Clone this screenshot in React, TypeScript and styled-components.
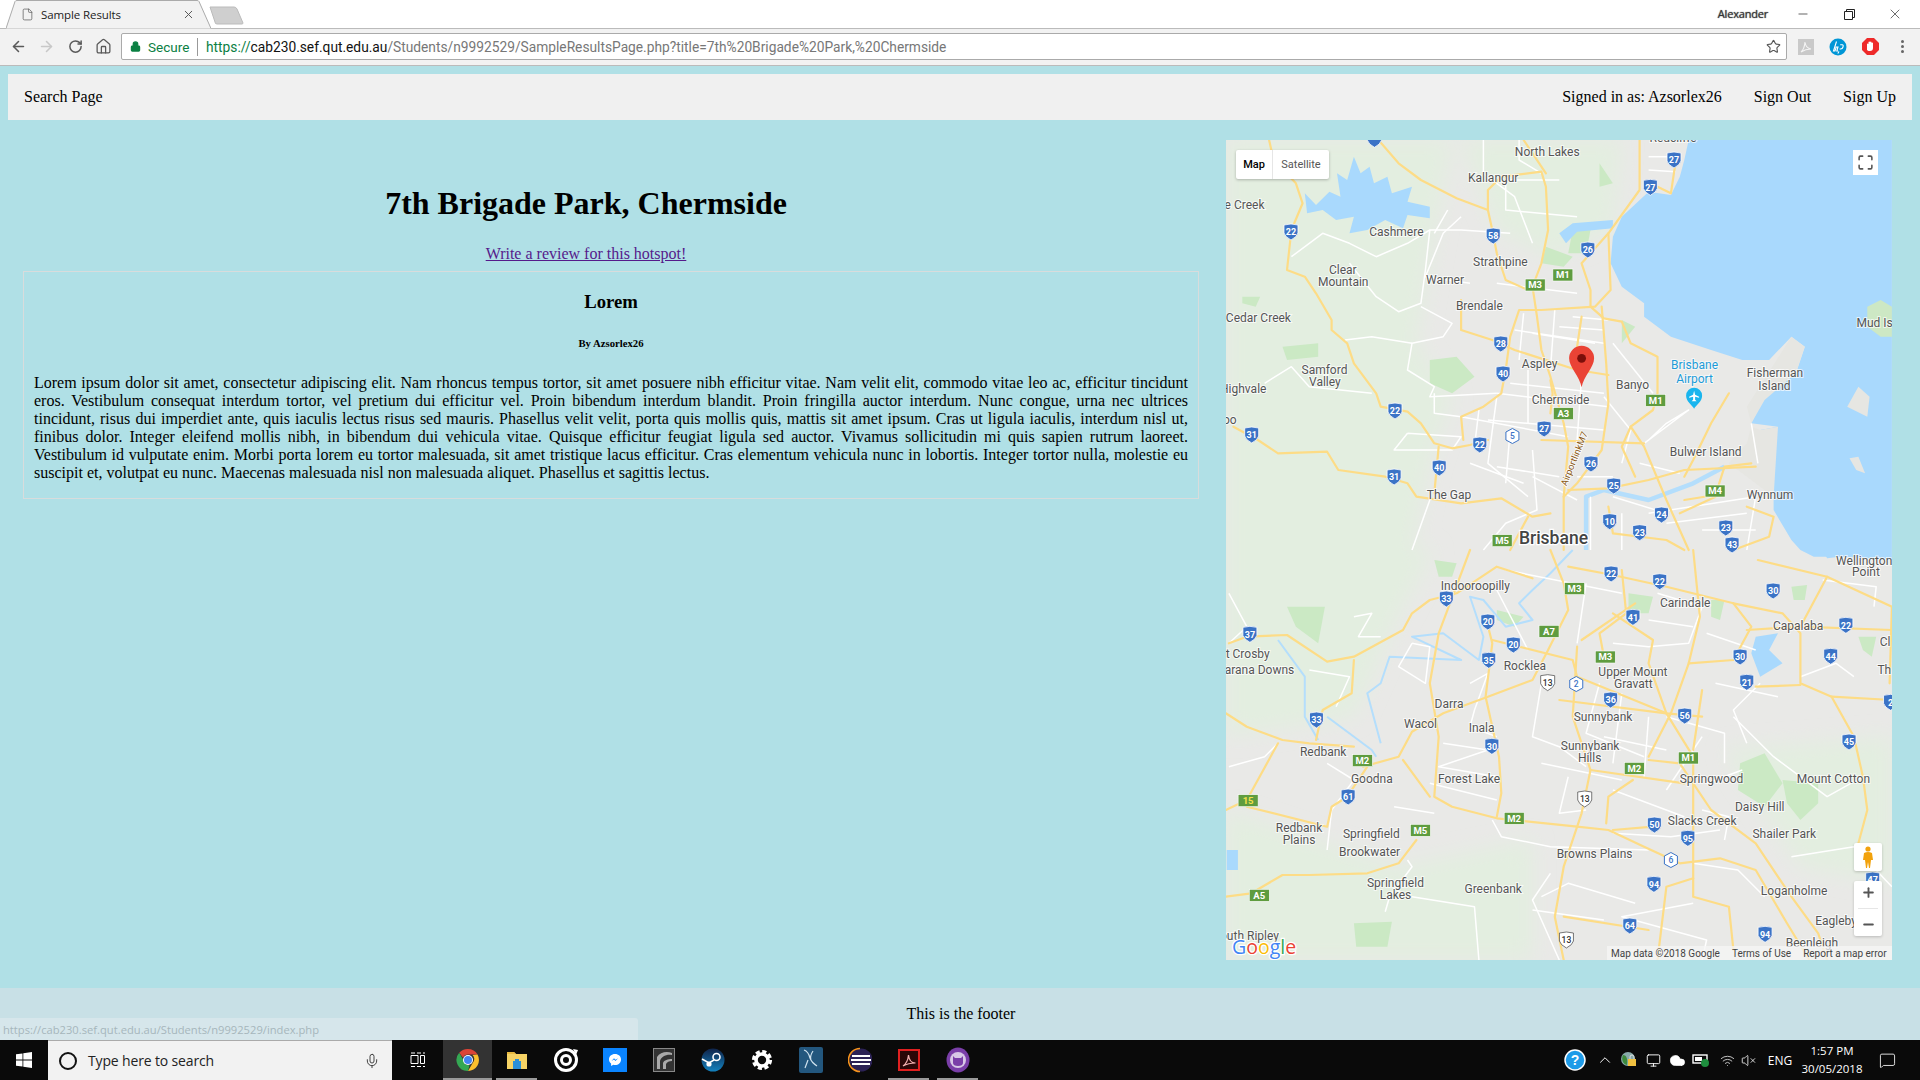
import React from "react";
import styled, { createGlobalStyle } from "styled-components";
import { ArrowLeft, ArrowRight, RotateCw, Home, Lock, Star, Minus, X, File, Mic, ChevronUp, VolumeX, Wifi, Cloud, Monitor, MessageSquare, Plus, Maximize } from "lucide-react";

const Global = createGlobalStyle`
  html, body { margin: 0; padding: 0; height: 100%; overflow: hidden; }
  body { font-family: "Liberation Serif", serif; font-size: 16px; color: #000; background: #b0e0e6; }
  * { box-sizing: border-box; }
`;

const Screen = styled.div`
  width: 1920px; height: 1080px; display: flex; flex-direction: column; overflow: hidden; position: relative;
`;

/* Browser frame */
const TitleBar = styled.div`
  height: 29px; background: #fff; border-bottom: 1px solid #bbb; display: flex; align-items: flex-start; padding-left: 6px; font-family: "Noto Sans", sans-serif;
`;
const Tab = styled.div`
  width: 205px; height: 29px; position: relative; display: flex; align-items: center; padding: 0 16px 1px 15px; gap: 7px; font-family: "Open Sans", sans-serif; font-size: 11.5px; color: #222;
`;
const TabShape = styled.svg`
  position: absolute; left: 0; top: 0; z-index: 0;
`;
const TabLabel = styled.span`
  position: relative; flex: 1; letter-spacing: -0.1px;
`;
const TabIcon = styled.span`
  position: relative; display: flex; color: #555;
`;
const NewTab = styled.svg`
  margin: 6px 0 0 -2px;
`;
const TitleSpacer = styled.div`flex: 1;`;
const UserName = styled.span`
  font-size: 11px; line-height: 28px; color: #333; margin-right: 12px; font-family: "Open Sans", sans-serif; letter-spacing: -0.2px; text-shadow: 0 0 1px #888, 0 0 1px #888;
`;
const WinButton = styled.div`
  width: 46px; height: 28px; display: flex; align-items: center; justify-content: center; color: #222;
`;
const WinButtons = styled.div`
  display: flex; padding-right: 2px;
`;
const Toolbar = styled.div`
  height: 37px; background: #f2f2f2; border-bottom: 1px solid #bbb; display: flex; align-items: center; padding-left: 4px; padding-bottom: 1px;
`;
const NavButton = styled.div<{ $off?: boolean }>`
  width: 28.5px; display: flex; justify-content: center; color: ${(p) => (p.$off ? "#c8c8c8" : "#5a5a5a")};
`;
const Omnibox = styled.div`
  width: 1666px; height: 27px; margin-left: 3px; background: #fff; border: 1px solid #aaa; border-radius: 2px; display: flex; align-items: center; padding: 0 5px 0 8px; font-family: Roboto, sans-serif; font-size: 13.75px;
`;
const Secure = styled.span`
  color: #0b8043; margin-left: 7px; font-size: 13.5px; width: 50px; border-right: 1px solid #999; line-height: 18px;
`;
const Url = styled.span`
  margin-left: 8px; flex: 1; color: #777; white-space: nowrap;
`;
const UrlGreen = styled.span`color: #0b8043;`;
const UrlDark = styled.span`color: #111;`;
const Actions = styled.div`
  display: flex; margin-left: 3px;
`;
const ActionSlot = styled.div`
  width: 32px; display: flex; justify-content: center; align-items: center;
`;
const Dots = styled.div`
  display: flex; flex-direction: column; gap: 2px;
  i { width: 3px; height: 3px; border-radius: 50%; background: #666; display: block; }
`;

/* Page */
const Viewport = styled.div`
  flex: 1; background: #b0e0e6; display: flex; flex-direction: column; position: relative; min-height: 0;
`;
const NavBar = styled.nav`
  margin: 8px 8px 0; height: 46px; background: #f0f0f0; display: flex; align-items: center; padding: 0 16px; gap: 32px; flex: none;
`;
const NavLink = styled.a`
  color: #000; text-decoration: none;
`;
const NavSpacer = styled.div`flex: 1;`;
const Main = styled.main`
  display: flex; flex: none; height: 840px;
`;
const LeftColumn = styled.section`
  width: 1226px; padding-top: 43.5px;
`;
const Header = styled.div`
  width: 1172px; text-align: center;
`;
const Title = styled.h1`
  margin: 21.44px 0 23px; font-size: 32px; line-height: 37px;
`;
const ReviewLink = styled.a`
  color: #551a8b; text-decoration: underline; display: block; line-height: 18px;
`;
const Card = styled.article`
  margin: 8px 0 0 23px; width: 1176px; border: 1px solid #d8dcdc; padding: 0 10px; text-align: center; display: flow-root;
`;
const CardTitle = styled.h3`
  margin: 18.72px 0; font-size: 18.72px; line-height: 21px;
`;
const CardBy = styled.h6`
  margin: 25px 0; font-size: 10.72px; line-height: 12px;
`;
const CardBody = styled.p`
  margin: 16px 0; text-align: justify; line-height: 18px;
`;
const MapFrame = styled.div`
  width: 666px; height: 820px; margin-top: 20px; position: relative; overflow: hidden; background: #e9e9e6; font-family: Roboto, sans-serif;
`;
const MapSvg = styled.svg`
  display: block;
`;
const MapType = styled.div`
  position: absolute; left: 10px; top: 10px; height: 29px; width: 93px; background: #fff; border-radius: 2px; display: flex; font-size: 11px; box-shadow: 0 1px 3px rgba(0,0,0,.25);
`;
const MapTypeOption = styled.div<{ $on?: boolean }>`
  flex: ${(p) => (p.$on ? "0 0 37px" : "1")}; display: flex; align-items: center; justify-content: center; color: ${(p) => (p.$on ? "#000" : "#565656")}; font-weight: ${(p) => (p.$on ? 500 : 400)}; border-right: ${(p) => (p.$on ? "1px solid #e6e6e6" : "none")};
`;
const FullscreenButton = styled.div`
  position: absolute; left: 627px; top: 10px; width: 25px; height: 25px; background: #fff; display: flex; align-items: center; justify-content: center; color: #555;
`;
const Pegman = styled.div`
  position: absolute; right: 10px; bottom: 89px; width: 28px; height: 28px; background: #fff; border-radius: 2px; display: flex; align-items: center; justify-content: center; box-shadow: 0 1px 3px rgba(0,0,0,.2);
`;
const ZoomBox = styled.div`
  position: absolute; right: 10px; bottom: 24px; width: 28px; height: 55px; background: #fff; border-radius: 2px; display: flex; flex-direction: column; align-items: center; justify-content: space-around; color: #555; box-shadow: 0 1px 3px rgba(0,0,0,.2);
`;
const ZoomRule = styled.div`
  width: 20px; height: 1px; background: #e6e6e6;
`;
const Attribution = styled.div`
  position: absolute; right: 0; bottom: 0; height: 14px; width: 285px; background: rgba(245,245,245,.75); display: flex; align-items: center; padding-left: 4px; font-size: 10px; color: #444; white-space: nowrap;
`;
const AttrTerms = styled.span`margin-left: 12px;`;
const Footer = styled.footer`
  margin-top: 28px; height: 52px; background: #c8e0e6; text-align: center; padding: 17px 0 0 2px; line-height: 18px; flex: none;
`;
const StatusBubble = styled.div`
  position: absolute; left: 0; bottom: 0; width: 638px; height: 22px; background: #d6e6eb; border-radius: 0 3px 0 0; font-family: "Open Sans", sans-serif; font-size: 11.2px; line-height: 23px; color: #a6b6bc; padding-left: 3px;
`;

/* Taskbar */
const Taskbar = styled.div`
  height: 40px; background: #0a0a0a; display: flex; align-items: stretch; flex: none; color: #fff; font-family: "Open Sans", sans-serif;
`;
const StartButton = styled.div`
  width: 48px; display: flex; align-items: center; justify-content: center;
`;
const SearchBox = styled.div`
  width: 344px; background: #f2f2f2; border-top: 1px solid #aaa; display: flex; align-items: center; padding: 0 12px 0 12px; color: #222; font-size: 14px; gap: 11px;
`;
const Cortana = styled.div`
  width: 18px; height: 18px; border-radius: 50%; border: 2.5px solid #111; flex: none; margin-left: -1px;
`;
const SearchText = styled.span`flex: 1; letter-spacing: -0.15px;`;
const TaskView = styled.div`
  width: 51px; display: flex; align-items: center; justify-content: center;
`;
const TaskApp = styled.div<{ $active?: boolean; $open?: boolean }>`
  width: 49px; position: relative; display: flex; align-items: center; justify-content: center; background: ${(p) => (p.$active ? "#333" : "transparent")};
  &::after { content: ""; position: absolute; left: ${(p) => (p.$active ? "0" : "4px")}; right: ${(p) => (p.$active ? "0" : "4px")}; bottom: 0; height: 2px; background: ${(p) => (p.$open ? "#9a9a9a" : "transparent")}; }
`;
const TraySpacer = styled.div`flex: 1;`;
const TrayItem = styled.div<{ $w: number }>`
  width: ${(p) => p.$w}px; display: flex; align-items: center; justify-content: center; font-size: 12px;
`;
const Clock = styled.div`
  width: 60px; display: flex; flex-direction: column; align-items: center; justify-content: center; font-size: 11.5px; line-height: 18px; white-space: nowrap;
`;

/* Map data, in crop coordinates of the reference map */
const mx = (x: number) => x / 2.24 - 6;
const myT = (y: number) => y / 3 - 10;
const myB = (y: number) => y / 3 + 410;
type Sec = "T" | "B";
const yOf = (s: Sec, y: number) => (s === "T" ? myT(y) : myB(y));
const pts = (s: Sec, a: number[]) => {
  const r: string[] = [];
  for (let i = 0; i < a.length; i += 2) r.push(`${mx(a[i]).toFixed(1)},${yOf(s, a[i + 1]).toFixed(1)}`);
  return r.join(" ");
};

const rural: [Sec, number[]][] = [
  ["T", [13, 30, 520, 30, 470, 400, 440, 640, 520, 800, 470, 1000, 430, 1260, 13, 1260]],
  ["B", [13, 0, 480, 0, 400, 200, 300, 500, 13, 560]],
  ["B", [13, 780, 400, 950, 700, 870, 700, 1230, 13, 1230]],
  ["B", [1130, 600, 1505, 560, 1505, 1000, 1300, 950]],
  ["T", [540, 30, 900, 30, 880, 300, 740, 380, 620, 300]],
];
const greens: [Sec, number[]][] = [
  ["T", [470, 690, 530, 680, 570, 740, 520, 790, 470, 760]],
  ["T", [140, 650, 220, 640, 220, 680, 150, 690]],
  ["T", [730, 350, 790, 380, 770, 410, 720, 400]],
  ["T", [790, 300, 830, 300, 820, 370, 780, 370]],
  ["T", [850, 100, 880, 160, 850, 170]],
  ["T", [50, 500, 90, 500, 80, 530, 50, 520]],
  ["T", [900, 570, 930, 590, 900, 640]],
  ["B", [150, 170, 235, 170, 220, 280, 170, 230]],
  ["B", [620, 180, 680, 200, 660, 230, 620, 210]],
  ["B", [915, 130, 970, 140, 960, 190, 915, 190]],
  ["B", [1165, 640, 1220, 610, 1260, 700, 1220, 770, 1160, 720]],
  ["B", [1260, 690, 1340, 700, 1340, 760, 1300, 810, 1270, 760]],
  ["B", [300, 1120, 385, 1115, 375, 1190, 305, 1190]],
  ["B", [1100, 150, 1130, 150, 1120, 210, 1100, 200]],
  ["B", [480, 30, 530, 40, 520, 80, 490, 80]],
  ["B", [1280, 110, 1315, 105, 1310, 150, 1285, 150]],
  ["B", [1430, 260, 1470, 260, 1460, 320, 1440, 300]],
];
const waterFill: [Sec, number[]][] = [
  ["T", [1050, 30, 1040, 90, 1030, 140, 1010, 195, 960, 185, 900, 260, 880, 320, 875, 400, 900, 470, 950, 520, 950, 560, 1010, 620, 1100, 660, 1170, 690, 1230, 690, 1280, 620, 1310, 650, 1290, 730, 1220, 800, 1190, 880, 1250, 890, 1210, 900, 1220, 980, 1240, 1070, 1240, 1140, 1280, 1230, 1300, 1260, 1505, 1260, 1505, 30]],
  ["B", [1300, 0, 1330, 20, 1400, 20, 1505, 30, 1505, 0]],
  ["T", [190, 190, 215, 225, 245, 185, 270, 200, 262, 130, 285, 150, 300, 80, 315, 130, 335, 110, 345, 160, 375, 140, 385, 190, 430, 170, 420, 215, 470, 230, 470, 265, 420, 255, 410, 295, 370, 270, 330, 300, 290, 310, 300, 260, 260, 270, 230, 240, 195, 250]],
  ["T", [760, 310, 790, 280, 880, 270, 880, 295, 800, 305, 775, 340]],
  ["B", [1200, 260, 1250, 250, 1230, 300, 1260, 340, 1210, 380, 1190, 310]],
  ["B", [1350, 0, 1380, 10, 1420, 15, 1360, 25]],
  ["B", [15, 900, 40, 900, 40, 960, 15, 960]],
];
const landIsles: [Sec, number[]][] = [
  ["T", [1180, 830, 1280, 620, 1310, 650, 1290, 730, 1220, 810, 1190, 880]],
  ["T", [1405, 830, 1430, 770, 1455, 800, 1450, 860]],
  ["T", [1410, 985, 1430, 980, 1445, 1030, 1425, 1020]],
  ["T", [1450, 530, 1480, 510, 1505, 530, 1505, 620, 1480, 620, 1450, 590]],
  ["T", [1190, 890, 1210, 900, 1250, 890, 1240, 1100, 1140, 1000, 1180, 940]],
];
const rivers: [Sec, number[]][] = [
  ["T", [820, 1260, 820, 1100, 860, 1080, 960, 1110, 1060, 1060, 1130, 1010]],
  ["B", [790, 0, 740, 70, 700, 120, 670, 160, 700, 210, 640, 230, 590, 150, 560, 140, 590, 260, 580, 330, 500, 250, 430, 260, 540, 330, 380, 320, 360, 400, 330, 430, 360, 580]],
  ["B", [130, 270, 190, 380, 190, 500, 220, 570]],
  ["B", [240, 500, 340, 600, 350, 620]],
];
const white: [Sec, number[]][] = [
  ["T", [160, 380, 230, 310, 290, 340, 350, 380, 420, 340, 470, 300, 540, 300, 650, 310]],
  ["T", [470, 300, 460, 420, 450, 520, 400, 545, 350, 500, 290, 400]],
  ["T", [560, 460, 460, 440, 500, 310, 540, 260]],
  ["T", [620, 460, 800, 490]],
  ["T", [590, 30, 590, 130, 660, 200, 700, 340]],
  ["T", [670, 30, 670, 90, 720, 130]],
  ["T", [450, 530, 520, 580, 500, 620, 430, 640, 420, 720, 480, 770, 470, 800, 620, 790]],
  ["T", [280, 630, 340, 620, 430, 640]],
  ["T", [100, 760, 160, 710, 200, 770, 340, 790]],
  ["T", [680, 550, 670, 690]],
  ["T", [660, 600, 860, 640]],
  ["T", [750, 540, 740, 720]],
  ["T", [620, 790, 870, 830]],
  ["T", [540, 860, 780, 920]],
  ["T", [480, 790, 480, 850, 540, 860]],
  ["T", [420, 910, 540, 920, 520, 960, 390, 960, 420, 910]],
  ["T", [620, 800, 600, 1000, 690, 1100]],
  ["T", [700, 960, 710, 1140, 640, 1180, 590, 1260]],
  ["T", [860, 800, 920, 900, 900, 1000]],
  ["T", [880, 640, 970, 790]],
  ["T", [800, 1040, 880, 1040]],
  ["T", [960, 1150, 1200, 1100, 1180, 1260]],
  ["T", [900, 1150, 900, 1260]],
  ["T", [1080, 1200, 1200, 1200]],
  ["T", [950, 940, 1050, 840, 1000, 880, 960, 930]],
  ["T", [430, 1260, 470, 1110]],
  ["T", [1190, 880, 1205, 1000]],
  ["T", [510, 240, 480, 310]],
  ["T", [760, 150, 640, 150, 640, 240, 800, 260]],
  ["T", [960, 80, 1030, 80]], ["T", [960, 120, 1020, 125]],
  ["T", [700, 610, 840, 640]], ["T", [650, 760, 860, 790]], ["T", [600, 870, 860, 900]], ["T", [580, 840, 570, 950]],
  ["T", [690, 720, 690, 880]], ["T", [810, 740, 800, 930]], ["T", [650, 900, 640, 1060]], ["T", [620, 1010, 760, 1040]],
  ["T", [700, 1040, 800, 1110]], ["T", [560, 1000, 680, 1060]], ["T", [880, 1100, 1000, 1150]], ["T", [940, 1000, 1030, 1030]],
  ["T", [790, 560, 870, 570]], ["T", [760, 590, 860, 600]], ["T", [830, 1100, 830, 1260]], ["T", [1000, 1180, 1180, 1150]],
  ["B", [20, 130, 60, 230, 20, 280]],
  ["B", [200, 360, 290, 380, 260, 470]],
  ["B", [300, 200, 340, 190, 310, 260, 360, 260]],
  ["B", [430, 280, 400, 350, 460, 400, 470, 290, 430, 280]],
  ["B", [560, 400, 600, 370, 570, 480, 560, 530, 620, 560]],
  ["B", [500, 580, 600, 600, 490, 650, 620, 680]],
  ["B", [470, 700, 620, 750]],
  ["B", [720, 400, 700, 560, 760, 590, 820, 650]],
  ["B", [780, 680, 760, 790, 820, 780]],
  ["B", [610, 810, 630, 860, 740, 890, 960, 900]],
  ["B", [850, 400, 820, 550, 950, 620]],
  ["B", [1000, 500, 1130, 550, 1130, 640]],
  ["B", [1150, 500, 1240, 620, 1360, 740, 1440, 680]],
  ["B", [980, 130, 1080, 170, 1050, 280, 960, 290, 880, 280]],
  ["B", [1090, 250, 1200, 300]],
  ["B", [1350, 90, 1470, 110, 1465, 170]],
  ["B", [1210, 400, 1150, 480, 1180, 580]],
  ["B", [1300, 380, 1380, 340, 1420, 380]],
  ["B", [1280, 920, 1420, 890, 1505, 1010]],
  ["B", [1080, 780, 1140, 800, 1130, 870]],
  ["B", [720, 1040, 780, 1000, 930, 1060]],
  ["B", [700, 1080, 860, 1110]],
  ["B", [740, 970, 700, 1050, 760, 1230]],
  ["B", [1060, 1060, 900, 1100, 1090, 1170, 1080, 1230]],
  ["B", [1220, 1040, 1160, 960, 1060, 940]],
  ["B", [430, 1040, 570, 1070, 580, 1230]],
  ["B", [390, 770, 480, 790]],
  ["B", [240, 640, 300, 690, 250, 780, 240, 900]],
  ["B", [20, 650, 100, 620, 130, 580]],
  ["B", [370, 1085, 380, 1040, 430, 950, 420, 930]],
  ["B", [880, 850, 1010, 860, 1120, 840]],
  ["B", [640, 60, 900, 130]], ["B", [820, 100, 800, 280]], ["B", [620, 120, 690, 300]], ["B", [960, 210, 1060, 230]],
  ["B", [860, 560, 1000, 600]], ["B", [900, 430, 880, 640]], ["B", [960, 500, 950, 680]], ["B", [720, 640, 900, 690]],
  ["B", [1080, 560, 1000, 720]], ["B", [1090, 700, 1170, 660]], ["B", [880, 720, 1040, 800]], ["B", [1110, 400, 1250, 440]],
];
const yellow: [Sec, number[]][] = [
  ["T", [355, 30, 400, 100, 450, 150, 530, 205, 600, 240, 610, 300, 620, 370, 640, 450, 690, 480, 720, 470]],
  ["T", [110, 30, 120, 90, 170, 160, 185, 220, 160, 300, 150, 420, 190, 440, 215, 490, 250, 570, 250, 600, 285, 640, 300, 700, 350, 790, 360, 830, 420, 845, 450, 880, 480, 940, 520, 955, 560, 945, 600, 930]],
  ["T", [600, 240, 600, 180, 630, 140, 720, 125, 730, 170, 735, 300, 720, 400, 700, 470, 710, 560, 720, 660, 740, 740, 770, 880, 780, 950, 770, 1100, 770, 1260]],
  ["T", [680, 30, 720, 110, 730, 130]],
  ["T", [940, 30, 940, 180, 870, 310, 810, 400, 830, 480, 830, 530, 860, 565, 900, 575, 920, 640, 980, 680, 980, 790, 970, 840, 920, 890, 950, 950, 1000, 1110, 1050, 1260]],
  ["T", [980, 170, 1010, 190, 1020, 100]],
  ["T", [870, 310, 875, 480, 840, 530, 720, 540, 670, 540, 650, 620, 640, 720, 630, 790, 590, 830, 540, 860, 545, 930]],
  ["T", [540, 510, 540, 600, 610, 630, 660, 660, 800, 720, 870, 735]],
  ["T", [810, 560, 800, 650]],
  ["T", [855, 530, 865, 700, 870, 820, 855, 960, 800, 1060, 770, 1100]],
  ["T", [740, 750, 745, 790, 740, 850]],
  ["T", [1140, 790, 1100, 880, 1060, 990, 1040, 1040]],
  ["T", [30, 890, 85, 930, 130, 970, 240, 965, 265, 1020, 370, 1040, 420, 1060, 440, 1100, 540, 1120, 630, 1105, 700, 1160, 740, 1150]],
  ["T", [490, 950, 480, 1090]],
  ["T", [720, 930, 950, 940]],
  ["T", [780, 1080, 870, 1075, 960, 1050, 1040, 1020, 1200, 1010]],
  ["T", [870, 1130, 880, 1210, 1000, 1230, 1040, 1260]],
  ["T", [1040, 1110, 1110, 1095, 1130, 1010, 1190, 1000]],
  ["T", [1030, 1150, 1110, 1100]],
  ["T", [1180, 1130, 1240, 1160, 1230, 1220, 1150, 1260]],
  ["T", [690, 1160, 650, 1260]],
  ["T", [920, 890, 900, 950, 930, 1040]],
  ["B", [13, 490, 60, 530, 140, 570, 200, 580, 300, 590]],
  ["B", [740, 0, 770, 100, 780, 180, 735, 300, 700, 390, 600, 440, 500, 490, 430, 545, 400, 620, 320, 650]],
  ["B", [560, 0, 490, 250, 470, 400, 490, 560, 480, 740, 520, 770, 620, 805, 800, 830, 870, 840, 950, 890, 1030, 940, 1120, 925, 1200, 960, 1270, 1120, 1320, 1230]],
  ["B", [20, 280, 60, 260, 150, 255, 240, 335, 300, 320, 410, 240, 430, 190, 470, 150, 530, 130, 620, 50, 700, 85]],
  ["B", [300, 330, 295, 430, 230, 480, 215, 570]],
  ["B", [610, 270, 790, 330, 800, 380, 1000, 490, 1080, 500]],
  ["B", [595, 200, 610, 280, 595, 440, 625, 620, 630, 730, 620, 800]],
  ["B", [1060, 0, 1075, 200, 1050, 340, 1010, 490, 960, 620]],
  ["B", [760, 450, 1000, 490]],
  ["B", [1050, 340, 1150, 330, 1190, 230, 1150, 160, 1000, 110, 880, 75, 780, 50]],
  ["B", [1150, 160, 1260, 190, 1300, 250, 1300, 400, 1370, 440, 1505, 450]],
  ["B", [1505, 240, 1300, 230, 1180, 240]],
  ["B", [1200, 410, 1300, 405]],
  ["B", [1370, 440, 1420, 560, 1440, 680, 1450, 780, 1430, 880]],
  ["B", [1360, 80, 1300, 230]],
  ["B", [1205, 30, 1360, 80, 1505, 170, 1500, 400]],
  ["B", [1000, 490, 1060, 620, 1060, 960, 1060, 1040, 1140, 1070, 1150, 1200]],
  ["B", [960, 630, 1030, 640, 1060, 700, 1100, 780, 1200, 880, 1280, 1040, 1340, 1150, 1360, 1230]],
  ["B", [830, 660, 1040, 700]],
  ["B", [830, 660, 810, 790, 770, 950, 750, 1100, 770, 1230]],
  ["B", [925, 690, 870, 740, 865, 820]],
  ["B", [800, 290, 790, 500, 830, 660]],
  ["B", [810, 270, 930, 160]],
  ["B", [880, 190, 970, 270, 960, 340, 1000, 490]],
  ["B", [470, 740, 410, 630]],
  ["B", [440, 870, 400, 940, 330, 970, 200, 975, 140, 975, 70, 1030, 13, 1040]],
  ["B", [13, 780, 60, 750, 130, 580]],
  ["B", [60, 770, 240, 830, 250, 770, 285, 740, 330, 650]],
  ["B", [1060, 985, 1000, 1010, 980, 1230]],
  ["B", [770, 1100, 960, 1140]],
  ["B", [1080, 420, 1060, 600]],
  ["B", [880, 840, 970, 830]],
  ["B", [900, 60, 910, 190, 850, 250, 860, 320]],
];

type Lab = [string, number, number, string?];
const labels: { s: Sec; items: Lab[] }[] = [
  { s: "T", items: [["Redcliffe", 1015, 25], ["North Lakes", 733, 67], ["Kallangur", 612, 145], ["Cashmere", 395, 307], ["e Creek", 55, 226], ["Strathpine", 628, 397], ["Clear", 275, 421], ["Mountain", 276, 457], ["Warner", 504, 451], ["Brendale", 581, 528], ["Cedar Creek", 86, 565], ["Mud Island", 1492, 579], ["Samford", 234, 721], ["Valley", 235, 757], ["Aspley", 716, 703], ["Banyo", 924, 764], ["Fisherman", 1243, 730], ["Island", 1242, 769], ["Highvale", 52, 778], ["Chermside", 763, 811], ["oo", 22, 870], ["The Gap", 513, 1096], ["Bulwer Island", 1088, 966], ["Wynnum", 1232, 1096]] },
  { s: "B", items: [["Wellington", 1443, 32], ["Point", 1447, 67], ["Indooroopilly", 572, 107], ["Carindale", 1042, 160], ["Capalaba", 1295, 227], ["Cl", 1490, 277], ["t Crosby", 62, 311], ["Karana Downs", 80, 361], ["Th", 1488, 361], ["Rocklea", 683, 349], ["Upper Mount", 925, 367], ["Gravatt", 926, 403], ["Darra", 513, 463], ["Sunnybank", 858, 502], ["Wacol", 449, 522], ["Inala", 586, 535], ["Sunnybank", 829, 589], ["Hills", 828, 625], ["Redbank", 231, 607], ["Goodna", 340, 688], ["Forest Lake", 558, 688], ["Springwood", 1101, 688], ["Mount Cotton", 1374, 688], ["Daisy Hill", 1209, 772], ["Slacks Creek", 1080, 814], ["Redbank", 177, 835], ["Plains", 177, 871], ["Springfield", 339, 853], ["Shailer Park", 1264, 853], ["Brookwater", 335, 907], ["Browns Plains", 839, 913], ["Springfield", 393, 1000], ["Lakes", 393, 1036], ["Greenbank", 612, 1018], ["Loganholme", 1286, 1024], ["Eagleby", 1380, 1114], ["Beenleigh", 1326, 1179], ["South Ripley", 58, 1159]] },
];

type Sh = [string, number, number];
const blue: { s: Sec; items: Sh[] }[] = [
  { s: "T", items: [["22", 159, 306], ["27", 1017, 90], ["27", 964, 172], ["58", 612, 318], ["26", 824, 360], ["28", 629, 642], ["40", 634, 732], ["22", 392, 843], ["31", 71, 915], ["27", 726, 897], ["22", 582, 945], ["40", 491, 1014], ["31", 390, 1041], ["26", 831, 1002], ["25", 882, 1068], ["10", 873, 1175], ["24", 989, 1155], ["23", 940, 1208], ["23", 1133, 1194], ["43", 1147, 1245], ["", 346, 28]] },
  { s: "B", items: [["22", 876, 72], ["22", 985, 95], ["30", 1239, 123], ["33", 507, 147], ["41", 925, 202], ["20", 600, 216], ["22", 1402, 226], ["37", 67, 253], ["20", 657, 285], ["44", 1368, 319], ["30", 1165, 321], ["35", 602, 331], ["21", 1180, 397], ["36", 875, 450], ["56", 1041, 498], ["33", 216, 510], ["45", 1409, 576], ["30", 609, 589], ["61", 287, 741], ["50", 973, 825], ["95", 1048, 865], ["94", 972, 1003], ["64", 918, 1128], ["94", 1221, 1153], ["47", 1462, 990], ["2", 1502, 457]] },
];
const green: { s: Sec; items: Sh[] }[] = [
  { s: "T", items: [["M1", 768, 435], ["M3", 706, 465], ["M1", 976, 811], ["A3", 769, 851], ["M4", 1109, 1083], ["M5", 632, 1232]] },
  { s: "B", items: [["M3", 794, 116], ["A7", 737, 244], ["M3", 863, 321], ["M2", 319, 632], ["M1", 1049, 624], ["M2", 928, 655], ["M2", 659, 805], ["M5", 449, 841], ["A5", 88, 1036], ["15", 63, 752]] },
];
const whiteShields: { s: Sec; items: Sh[] }[] = [{ s: "B", items: [["13", 734, 398], ["13", 817, 747], ["13", 776, 1170]] }];
const hexes: { s: Sec; items: Sh[] }[] = [
  { s: "T", items: [["5", 655, 918]] },
  { s: "B", items: [["2", 798, 402], ["6", 1010, 930]] },
];

const shieldPath = "M-7,-7 Q0,-9 7,-7 L7,1 Q6,5 0,8 Q-6,5 -7,1 Z";
const hexPath = "M0,-7.5 L6.5,-4 L6.5,4 L0,7.5 L-6.5,4 L-6.5,-4 Z";

const MapDrawing = () => (
  <MapSvg width={666} height={820} viewBox="0 0 666 820" fontFamily="Roboto, sans-serif">
    <defs>
      <filter id="soft" x="-10%" y="-10%" width="120%" height="120%"><feGaussianBlur stdDeviation="10" /></filter>
    </defs>
    <rect width="666" height="820" fill="#e9e9e7" />
    <g filter="url(#soft)">{rural.map(([s, a], i) => <polygon key={i} points={pts(s, a)} fill="#e3eee0" />)}</g>
    {greens.map(([s, a], i) => <polygon key={i} points={pts(s, a)} fill="#cbe9c4" />)}
    {waterFill.map(([s, a], i) => <polygon key={i} points={pts(s, a)} fill="#a9d9fd" />)}
    {landIsles.map(([s, a], i) => <polygon key={i} points={pts(s, a)} fill={i === 3 ? "#cde8c4" : "#e6e6e2"} />)}
    {rivers.map(([s, a], i) => <polyline key={i} points={pts(s, a)} fill="none" stroke="#b4defc" strokeWidth={s === "T" ? 4.5 : 2} strokeLinejoin="round" />)}
    {white.map(([s, a], i) => <polyline key={i} points={pts(s, a)} fill="none" stroke="#fff" strokeWidth="1.5" strokeLinejoin="round" />)}
    {yellow.map(([s, a], i) => <polyline key={i} points={pts(s, a)} fill="none" stroke="#fddc86" strokeWidth="2.2" strokeLinejoin="round" strokeLinecap="round" />)}
    {labels.map((g) => g.items.map(([t, x, y]) => (
      <text key={t + x + y} x={mx(x)} y={yOf(g.s, y) + 4} textAnchor="middle" fontSize="12" fill="#555" stroke="#fff" strokeWidth="2" strokeOpacity=".7" paintOrder="stroke">{t}</text>
    )))}
    <text x={mx(1063)} y={myT(706) + 4} textAnchor="middle" fontSize="12" fill="#1d9bd8" stroke="#fff" strokeWidth="2" strokeOpacity=".6" paintOrder="stroke">Brisbane</text>
    <text x={mx(1063)} y={myT(746) + 4} textAnchor="middle" fontSize="12" fill="#1d9bd8" stroke="#fff" strokeWidth="2" strokeOpacity=".6" paintOrder="stroke">Airport</text>
    <text x={mx(747)} y={myT(1225) + 6} textAnchor="middle" fontSize="17.5" fontWeight="500" fill="#444" stroke="#fff" strokeWidth="2.5" paintOrder="stroke">Brisbane</text>
    <text x="0" y="0" transform={`translate(${mx(800)},${myT(990)}) rotate(-68)`} textAnchor="middle" fontSize="9.5" fill="#8a5a16" stroke="#fff" strokeWidth="1.5" paintOrder="stroke">AirportlinkM7</text>
    {blue.map((g) => g.items.map(([t, x, y]) => (
      <g key={t + x + y} transform={`translate(${mx(x)},${yOf(g.s, y)})`}>
        <path d={shieldPath} fill="#3b73c6" stroke="#fff" strokeWidth=".8" />
        <text y="3.2" textAnchor="middle" fontSize="9" fontWeight="700" fill="#fff">{t}</text>
      </g>
    )))}
    {green.map((g) => g.items.map(([t, x, y]) => (
      <g key={t + x + y} transform={`translate(${mx(x)},${yOf(g.s, y)})`}>
        <rect x="-10" y="-6" width="20" height="12" fill="#5f9c3f" stroke="#fff" strokeWidth=".6" />
        <text y="3.4" textAnchor="middle" fontSize="9.5" fontWeight="700" fill={t === "15" ? "#f5e04a" : "#fff"}>{t}</text>
      </g>
    )))}
    {whiteShields.map((g) => g.items.map(([t, x, y]) => (
      <g key={t + x + y} transform={`translate(${mx(x)},${yOf(g.s, y)})`}>
        <path d={shieldPath} fill="#fff" stroke="#555" strokeWidth=".8" />
        <text y="3.2" textAnchor="middle" fontSize="8.5" fontWeight="500" fill="#333">{t}</text>
      </g>
    )))}
    {hexes.map((g) => g.items.map(([t, x, y]) => (
      <g key={t + x + y} transform={`translate(${mx(x)},${yOf(g.s, y)})`}>
        <path d={hexPath} fill="#fff" stroke="#3b73c6" strokeWidth="1" />
        <text y="3.2" textAnchor="middle" fontSize="8.5" fontWeight="500" fill="#3b73c6">{t}</text>
      </g>
    )))}
    {/* airport pin */}
    <g transform={`translate(${mx(1062)},${myT(800)})`}>
      <path d="M0,12 C-2,8 -8,5 -8,-1 A8,8 0 1 1 8,-1 C8,5 2,8 0,12 Z" fill="#19b5ee" />
      <path d="M0,-6 L1,-2 L5,0 L5,1 L1,0 L1,3 L2.5,4.5 L-2.5,4.5 L-1,3 L-1,0 L-5,1 L-5,0 L-1,-2 Z" fill="#fff" />
    </g>
    {/* marker */}
    <g transform={`translate(${mx(810)},${myT(649)})`}>
      <path d="M0,41 C-2,30 -12.5,21 -12.5,12 A12.5,12.5 0 1 1 12.5,12 C12.5,21 2,30 0,41 Z" fill="#ea4335" />
      <circle cx="0" cy="12" r="4.4" fill="#7b0f0a" />
    </g>
    <text x="6" y="814" fontSize="19.5" fontWeight="500" stroke="#fff" strokeWidth="2.5" paintOrder="stroke" fontFamily="'Open Sans', sans-serif">
      <tspan fill="#4285f4">G</tspan><tspan fill="#ea4335">o</tspan><tspan fill="#fbbc05">o</tspan><tspan fill="#4285f4">g</tspan><tspan fill="#34a853">l</tspan><tspan fill="#ea4335">e</tspan>
    </text>
  </MapSvg>
);

const WindowsLogo = () => (
  <svg width="16" height="16" viewBox="0 0 16 16"><path fill="#fff" d="M0 2.3 6.5 1.4v6.2H0zM7.3 1.3 16 0v7.6H7.3zM0 8.4h6.5v6.2L0 13.7zM7.3 8.4H16V16l-8.7-1.3z" /></svg>
);
const ChromeLogo = () => (
  <svg width="24" height="24" viewBox="0 0 24 24">
    <path d="M12 1a11 11 0 0 1 9.5 5.5H12a5.5 5.5 0 0 0-5 3.2L3.2 4.8A11 11 0 0 1 12 1z" fill="#db4437" />
    <path d="M21.5 6.5A11 11 0 0 1 12 23l4.8-8.2A5.5 5.5 0 0 0 16.5 7z" fill="#fbc02d" />
    <path d="M12 23A11 11 0 0 1 3.2 4.8L7.9 13a5.5 5.5 0 0 0 5.6 4.3z" fill="#34a853" />
    <circle cx="12" cy="12" r="5" fill="#fff" /><circle cx="12" cy="12" r="4" fill="#4285f4" />
  </svg>
);
const FolderLogo = () => (
  <svg width="22" height="20" viewBox="0 0 22 20">
    <path d="M1 2h7l2 2h11v15H1z" fill="#f6d365" /><path d="M1 2h7l2 2H1z" fill="#e8b93f" /><rect x="7" y="11" width="8" height="8" fill="#2a8fd8" /><rect x="9" y="9" width="4" height="3" fill="#2a8fd8" />
  </svg>
);
const RingLogo = () => (
  <svg width="26" height="26" viewBox="0 0 26 26"><circle cx="13" cy="13" r="10.5" fill="none" stroke="#fff" strokeWidth="3" /><circle cx="13" cy="13" r="4.5" fill="none" stroke="#fff" strokeWidth="3" /><path d="M20 2l5 1-2 5z" fill="#fff" /></svg>
);
const MessengerLogo = () => (
  <svg width="24" height="24" viewBox="0 0 24 24"><rect width="24" height="24" fill="#0a84ff" /><path d="M12 6c-3.5 0-6 2.4-6 5.4 0 1.7.8 3.1 2.1 4V18l2.2-1.2c.5.1 1.1.2 1.7.2 3.5 0 6-2.5 6-5.6S15.5 6 12 6z" fill="#fff" /><path d="M8.5 13l2.5-2.7 1.5 1.4 2.600-1.400-2.600 2.800-1.500-1.500z" fill="#0a84ff" /></svg>
);
const WarpLogo = () => (
  <svg width="22" height="24" viewBox="0 0 22 24"><rect x=".5" y=".5" width="21" height="23" fill="#333" stroke="#888" /><path d="M4 21V9c3-5 10-6 15-4v2C13 6 8 9 7 13v8zM10 21v-6c1-3 5-4 9-4v2c-3 0-5 1-6 3v5z" fill="#aaa" /></svg>
);
const SteamLogo = () => (
  <svg width="24" height="24" viewBox="0 0 24 24"><defs><linearGradient id="st" x1="0" y1="0" x2="0" y2="1"><stop offset="0" stopColor="#10244a" /><stop offset="1" stopColor="#1382bf" /></linearGradient></defs><circle cx="12" cy="12" r="11.5" fill="url(#st)" /><circle cx="15.5" cy="9" r="3.5" fill="none" stroke="#fff" strokeWidth="1.6" /><circle cx="8" cy="16" r="2.6" fill="#fff" /><path d="M1 11l7 4 5-3" stroke="#fff" strokeWidth="1.5" fill="none" /></svg>
);
const GearLogo = () => (
  <svg width="22" height="22" viewBox="0 0 22 22">
    <circle cx="11" cy="11" r="6" fill="none" stroke="#fff" strokeWidth="3.6" />
    <circle cx="11" cy="11" r="8.6" fill="none" stroke="#fff" strokeWidth="3" strokeDasharray="4.2 2.55" />
  </svg>
);
const WorkbenchLogo = () => (
  <svg width="24" height="26" viewBox="0 0 24 26"><rect width="24" height="26" rx="2" fill="#23577e" /><path d="M5 3c3 1 5 4 6 8 1 3 4 6 7 8M14 4c-2 3-3 6-2 9M9 13l-3 8" stroke="#cfe2ee" strokeWidth="1.2" fill="none" /></svg>
);
const EclipseLogo = () => (
  <svg width="24" height="26" viewBox="0 0 24 26"><circle cx="13" cy="13" r="11.5" fill="#2c2255" /><path d="M12 1.5A11.5 11.5 0 0 0 12 24.5" fill="none" stroke="#f7941e" strokeWidth="1.6" /><path d="M4 9h18M3 13h20M4 17h18" stroke="#fff" strokeWidth="2" /></svg>
);
const AcrobatLogo = () => (
  <svg width="22" height="22" viewBox="0 0 22 22"><rect x="1" y="1" width="20" height="20" fill="#2b0707" stroke="#e02020" strokeWidth="2" /><path d="M5 17c3-2 5-6 5.5-11 .5 5 3 8 7 8-4 0-9 1-12.5 3z" fill="none" stroke="#f3b0b0" strokeWidth="1.2" /></svg>
);
const CatLogo = () => (
  <svg width="24" height="26" viewBox="0 0 24 26"><ellipse cx="12" cy="13" rx="11.5" ry="12.5" fill="#7a3ea8" /><circle cx="12" cy="13" r="8" fill="#d8c8e6" /><path d="M7 9l2 2h6l2-2v7c0 2-2 3-5 3s-5-1-5-3z" fill="#7a3ea8" /></svg>
);
const HpLogo = () => (
  <svg width="18" height="18" viewBox="0 0 18 18"><circle cx="9" cy="9" r="8.5" fill="#0096d6" /><path d="M7.5 3.500 4.500 13h1.500l1.200-4h1.800L7.800 13h1.400M10 13.500l-1.200 2M11.200 6.800h2c1 0 1.200 1 .8 2.200-.4 1.400-1.200 2-2.400 2h-1" stroke="#fff" strokeWidth="1.1" fill="none" /></svg>
);
const StopLogo = () => (
  <svg width="17" height="17" viewBox="0 0 17 17"><path d="M5 0h7l5 5v7l-5 5H5l-5-5V5z" fill="#ee2a2a" /><path d="M5 12V6a.8.8 0 0 1 1.5 0V4a.8.8 0 0 1 1.5 0 .8.8 0 0 1 1.5 0V5a.8.8 0 0 1 1.5 0v5c0 2-1 3-3 3s-2.5-.5-3-1z" fill="#fff" /></svg>
);
const PdfExt = () => (
  <svg width="16" height="16" viewBox="0 0 16 16"><rect width="16" height="16" fill="#c9c9c9" /><path d="M3 13c2-1.500 3.500-5 4-10 .5 4 2.500 6.500 6 7-3 0-7 1-10 3z" fill="none" stroke="#f4f4f4" strokeWidth="1.1" /></svg>
);
const Help = () => (
  <svg width="22" height="22" viewBox="0 0 22 22"><circle cx="11" cy="11" r="10" fill="#1e9be8" stroke="#fff" strokeWidth="1.5" /><text x="11" y="16" textAnchor="middle" fontFamily="'Liberation Sans', sans-serif" fontSize="14" fontWeight="700" fill="#fff">?</text></svg>
);
const SecureTray = () => (
  <svg width="18" height="18" viewBox="0 0 18 18"><circle cx="8" cy="8" r="7" fill="#8aa" /><path d="M3 4c3 0 5 3 4 10-4-1-6-5-4-10z" fill="#3c8a3c" /><rect x="8" y="8" width="8" height="7" fill="#f0c040" /><path d="M10 8V6a2 2 0 0 1 4 0v2" stroke="#ddd" fill="none" /></svg>
);
const BatteryTray = () => (
  <svg width="18" height="16" viewBox="0 0 18 16"><rect x="1" y="3" width="14" height="8" fill="none" stroke="#fff" strokeWidth="1.4" /><rect x="3" y="5" width="7" height="4" fill="#fff" /><circle cx="13" cy="11" r="4" fill="#1e8e3e" /></svg>
);
const PegmanIcon = () => (
  <svg width="12" height="22" viewBox="0 0 12 22"><circle cx="6" cy="3" r="2.6" fill="#f2a20c" /><path d="M2 7q4-2 8 0l1 7H9l-1 8H7l-1-6-1 6H4l-1-8H1z" fill="#f2a20c" /></svg>
);

const taskApps: { node: React.ReactNode; active?: boolean; open?: boolean }[] = [
  { node: <ChromeLogo />, active: true, open: true },
  { node: <FolderLogo />, open: true },
  { node: <RingLogo /> },
  { node: <MessengerLogo /> },
  { node: <WarpLogo /> },
  { node: <SteamLogo /> },
  { node: <GearLogo /> },
  { node: <WorkbenchLogo /> },
  { node: <EclipseLogo /> },
  { node: <AcrobatLogo />, open: true },
  { node: <CatLogo />, open: true },
];

export default function App() {
  return (
    <Screen>
      <Global />
      <TitleBar>
        <Tab>
          <TabShape width="205" height="29" viewBox="0 0 205 29">
            <path d="M0,28.5 L9,1.5 Q9.5,.5 11,.5 L191,.5 Q192.5,.5 193,1.5 L205,28.5" fill="#f2f2f2" stroke="#aaa" />
          </TabShape>
          <TabIcon><File size={13} strokeWidth={1.3} /></TabIcon>
          <TabLabel>Sample Results</TabLabel>
          <TabIcon><X size={13} strokeWidth={1.8} /></TabIcon>
        </Tab>
        <NewTab width="36" height="19" viewBox="0 0 36 19"><path d="M1,1 L25,1 Q27,1 28,3 L34,17 Q34,18 33,18 L8,18 Q6,18 6,16 Z" fill="#cfcfcf" stroke="#bbb" /></NewTab>
        <TitleSpacer />
        <UserName>Alexander</UserName>
        <WinButtons>
          <WinButton><Minus size={14} strokeWidth={1.2} /></WinButton>
          <WinButton><svg width="11" height="11" viewBox="0 0 11 11"><path d="M.5 2.5h8v8h-8zM2.500 2.500v-2h8v8h-2" fill="none" stroke="#222" /></svg></WinButton>
          <WinButton><X size={16} strokeWidth={1} /></WinButton>
        </WinButtons>
      </TitleBar>
      <Toolbar>
        <NavButton><ArrowLeft size={17} strokeWidth={2.2} /></NavButton>
        <NavButton $off><ArrowRight size={17} strokeWidth={2.2} /></NavButton>
        <NavButton><RotateCw size={15} strokeWidth={2.4} /></NavButton>
        <NavButton><Home size={17} strokeWidth={1.8} /></NavButton>
        <Omnibox>
          <Lock size={11} color="#0b8043" fill="#0b8043" strokeWidth={2.5} />
          <Secure>Secure</Secure>
          <Url><UrlGreen>https://</UrlGreen><UrlDark>cab230.sef.qut.edu.au</UrlDark>/Students/n9992529/SampleResultsPage.php?title=7th%20Brigade%20Park,%20Chermside</Url>
          <Star size={15} color="#555" strokeWidth={1.8} />
        </Omnibox>
        <Actions>
          <ActionSlot><PdfExt /></ActionSlot>
          <ActionSlot><HpLogo /></ActionSlot>
          <ActionSlot><StopLogo /></ActionSlot>
          <ActionSlot><Dots><i /><i /><i /></Dots></ActionSlot>
        </Actions>
      </Toolbar>
      <Viewport>
        <NavBar>
          <NavLink>Search Page</NavLink>
          <NavSpacer />
          <NavLink>Signed in as: Azsorlex26</NavLink>
          <NavLink>Sign Out</NavLink>
          <NavLink>Sign Up</NavLink>
        </NavBar>
        <Main>
          <LeftColumn>
            <Header>
              <Title>7th Brigade Park, Chermside</Title>
              <ReviewLink>Write a review for this hotspot!</ReviewLink>
            </Header>
            <Card>
              <CardTitle>Lorem</CardTitle>
              <CardBy>By Azsorlex26</CardBy>
              <CardBody>
                Lorem ipsum dolor sit amet, consectetur adipiscing elit. Nam rhoncus tempus tortor, sit amet posuere nibh efficitur vitae. Nam velit elit, commodo vitae leo ac, efficitur tincidunt eros. Vestibulum consequat interdum tortor, vel pretium dui efficitur vel. Proin bibendum interdum blandit. Proin fringilla auctor interdum. Nunc congue, urna nec ultrices tincidunt, risus dui imperdiet ante, quis iaculis lectus risus sed mauris. Phasellus velit velit, porta quis mollis quis, mattis sit amet ipsum. Cras ut ligula iaculis, interdum nisl ut, finibus dolor. Integer eleifend mollis nibh, in bibendum dui vehicula vitae. Quisque efficitur feugiat ligula sed auctor. Vivamus sollicitudin mi quis sapien rutrum laoreet. Vestibulum id vulputate enim. Morbi porta lorem eu tortor malesuada, sit amet tristique lacus efficitur. Cras elementum vehicula nunc in lobortis. Integer tortor nulla, molestie eu suscipit et, volutpat eu nunc. Maecenas malesuada nisl non malesuada aliquet. Phasellus et sagittis lectus.
              </CardBody>
            </Card>
          </LeftColumn>
          <MapFrame>
            <MapDrawing />
            <MapType>
              <MapTypeOption $on>Map</MapTypeOption>
              <MapTypeOption>Satellite</MapTypeOption>
            </MapType>
            <FullscreenButton><Maximize size={17} strokeWidth={2.2} /></FullscreenButton>
            <Pegman><PegmanIcon /></Pegman>
            <ZoomBox>
              <Plus size={15} strokeWidth={3} />
              <ZoomRule />
              <Minus size={15} strokeWidth={3} />
            </ZoomBox>
            <Attribution>
              Map data ©2018 Google<AttrTerms>Terms of Use</AttrTerms><AttrTerms>Report a map error</AttrTerms>
            </Attribution>
          </MapFrame>
        </Main>
        <Footer>This is the footer</Footer>
        <StatusBubble>https://cab230.sef.qut.edu.au/Students/n9992529/index.php</StatusBubble>
      </Viewport>
      <Taskbar>
        <StartButton><WindowsLogo /></StartButton>
        <SearchBox>
          <Cortana />
          <SearchText>Type here to search</SearchText>
          <Mic size={16} color="#444" strokeWidth={1.5} />
        </SearchBox>
        <TaskView>
          <svg width="16" height="16" viewBox="0 0 16 16"><path d="M1 3.5h7v8H1zM10.500 3.500h4v8h-4z" fill="none" stroke="#fff" /><path d="M1 1h14M1 14.500h14" stroke="#fff" strokeDasharray="4 2" /></svg>
        </TaskView>
        {taskApps.map((a, i) => <TaskApp key={i} $active={a.active} $open={a.open}>{a.node}</TaskApp>)}
        <TraySpacer />
        <TrayItem $w={30}><Help /></TrayItem>
        <TrayItem $w={30}><ChevronUp size={18} strokeWidth={1.3} /></TrayItem>
        <TrayItem $w={18}><SecureTray /></TrayItem>
        <TrayItem $w={30}><Monitor size={15} strokeWidth={1.5} /></TrayItem>
        <TrayItem $w={18}><Cloud size={17} fill="#fff" strokeWidth={1} /></TrayItem>
        <TrayItem $w={30}><BatteryTray /></TrayItem>
        <TrayItem $w={22}><Wifi size={15} strokeWidth={1.5} color="#ccc" /></TrayItem>
        <TrayItem $w={20}><VolumeX size={15} strokeWidth={1.3} /></TrayItem>
        <TrayItem $w={44}>ENG</TrayItem>
        <Clock><span>1:57 PM</span><span>30/05/2018</span></Clock>
        <TrayItem $w={50}><MessageSquare size={17} strokeWidth={1.2} /></TrayItem>
        <TrayItem $w={8} />
      </Taskbar>
    </Screen>
  );
}
